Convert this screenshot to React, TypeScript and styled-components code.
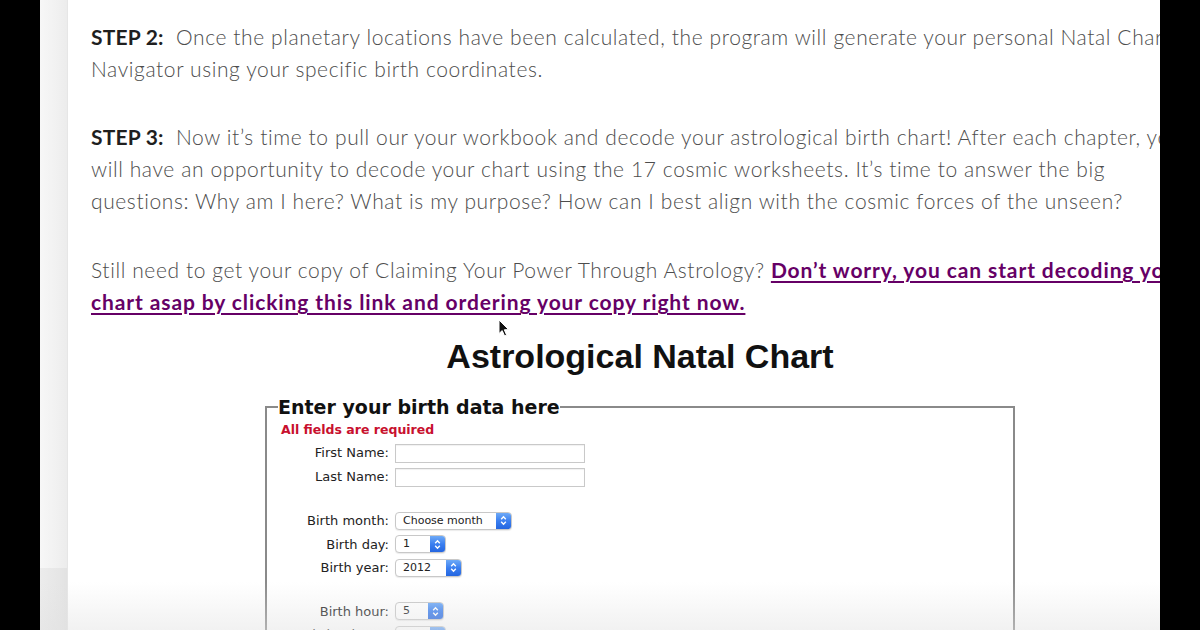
import React from "react";
import styled, { createGlobalStyle } from "styled-components";

const GlobalStyle = createGlobalStyle`
  html, body {
    margin: 0;
    padding: 0;
    background: #000000;
  }
`;

const Frame = styled.div`
  position: relative;
  display: flex;
  width: 1200px;
  height: 630px;
  overflow: hidden;
  background: #000000;
`;

const BlackBar = styled.div`
  flex: 0 0 40px;
  background: #000000;
  position: relative;
  z-index: 2;
`;

const SideStrip = styled.div`
  flex: 0 0 28px;
  display: flex;
  flex-direction: column;
  border-right: 1px solid #e6e6e6;
  box-sizing: border-box;
`;

const StripTop = styled.div`
  flex: 1;
  background: linear-gradient(to right, #f7f7f7, #f1f1f1 60%, #ececec);
`;

const StripBottom = styled.div`
  flex: 0 0 62px;
  background: linear-gradient(to right, #ececec, #e6e6e6 70%, #e2e2e2);
`;

const Viewport = styled.div`
  flex: 0 0 1092px;
  overflow: hidden;
  background: #ffffff;
`;

const Content = styled.div`
  width: 1144px;
  padding: 21px 0 0 23px;
  box-sizing: border-box;
`;

const Para = styled.p<{ $gap?: number }>`
  margin: 0 0 ${(p) => p.$gap ?? 36}px 0;
  font-family: Lato, "Open Sans", sans-serif;
  font-weight: 300;
  font-size: 21px;
  line-height: 32px;
  color: #4d4d4d;
  white-space: nowrap;
  letter-spacing: 0.6px;
`;

const Step = styled.strong`
  font-weight: 700;
  color: #1f1f1f;
  letter-spacing: 0.2px;
  margin-right: 6px;
`;

const BookLink = styled.a`
  color: #660066;
  font-weight: 700;
  letter-spacing: 0.9px;
  text-decoration: underline;
  text-underline-offset: 3px;
  text-decoration-thickness: 2px;
`;

const Title = styled.h1`
  margin: 0;
  font-family: "Liberation Sans", Arial, sans-serif;
  font-weight: 700;
  font-size: 34px;
  line-height: 40px;
  color: #111111;
  text-align: center;
  padding-right: 23px;
`;

const Fieldset = styled.fieldset`
  width: 750px;
  margin: 21px auto 0 174px;
  padding: 0 0 0 11px;
  box-sizing: border-box;
  border: 2px solid #8a8a8a;
  border-bottom: none;
  height: 260px;
`;

const Legend = styled.legend`
  padding: 0;
  font-family: "DejaVu Sans", Verdana, sans-serif;
  font-weight: 700;
  font-size: 19px;
  line-height: 20px;
  color: #111111;
`;

const Required = styled.div`
  margin: 5px 0 4px 3px;
  font-family: "DejaVu Sans", Verdana, sans-serif;
  font-weight: 700;
  font-size: 12.5px;
  color: #c8102e;
`;

const FormGrid = styled.div`
  display: grid;
  grid-template-columns: 111px auto;
  column-gap: 6px;
  align-items: center;
  justify-items: start;
`;

const Label = styled.label<{ $h?: number }>`
  justify-self: end;
  height: ${(p) => p.$h ?? 24}px;
  line-height: ${(p) => p.$h ?? 24}px;
  font-family: "DejaVu Sans", Verdana, sans-serif;
  font-size: 13px;
  color: #222222;
  white-space: nowrap;
`;

const Spacer = styled.div`
  grid-column: 1 / span 2;
  height: 20px;
`;

const TextInput = styled.div`
  width: 190px;
  height: 19px;
  box-sizing: border-box;
  border: 1px solid #c9c9c9;
  box-shadow: inset 0 1px 1px rgba(0, 0, 0, 0.06);
  background: #ffffff;
`;

const Select = styled.div<{ $w: number }>`
  display: flex;
  width: ${(p) => p.$w}px;
  height: 18px;
  box-sizing: border-box;
  border: 1px solid #c8c8c8;
  border-radius: 4px;
  overflow: hidden;
  background: #ffffff;
  box-shadow: 0 1px 1px rgba(0, 0, 0, 0.08);
`;

const SelectText = styled.span`
  flex: 1;
  padding-left: 7px;
  font-family: "DejaVu Sans", Verdana, sans-serif;
  font-size: 11px;
  line-height: 16px;
  color: #222222;
  white-space: nowrap;
  overflow: hidden;
`;

const Stepper = styled.span`
  flex: 0 0 15px;
  display: flex;
  align-items: center;
  justify-content: center;
  background: linear-gradient(to bottom, #6eaaf7, #3b7ff0 50%, #2466e0);
`;

const BottomShade = styled.div`
  position: absolute;
  left: 0;
  right: 0;
  bottom: 0;
  height: 48px;
  background: linear-gradient(to bottom, rgba(230, 230, 230, 0), rgba(225, 225, 225, 0.45));
  pointer-events: none;
  z-index: 1;
`;

const Cursor = styled.svg`
  position: absolute;
  left: 498px;
  top: 319px;
  z-index: 3;
`;

const Arrows = () => (
  <svg width="7" height="11" viewBox="0 0 7 11">
    <path d="M1.2 4.2 L3.5 1.8 L5.8 4.2 M1.2 6.8 L3.5 9.2 L5.8 6.8" fill="none" stroke="#ffffff" strokeWidth="1.4" />
  </svg>
);

const Dropdown = ({ w, value }: { w: number; value: string }) => (
  <Select $w={w}>
    <SelectText>{value}</SelectText>
    <Stepper>
      <Arrows />
    </Stepper>
  </Select>
);

export default function App() {
  return (
    <>
      <GlobalStyle />
      <Frame>
        <BlackBar />
        <SideStrip>
          <StripTop />
          <StripBottom />
        </SideStrip>
        <Viewport>
          <Content>
            <Para>
              <Step>STEP 2:</Step> Once the planetary locations have been calculated, the program will generate your personal Natal Chart
              <br />
              Navigator using your specific birth coordinates.
            </Para>
            <Para $gap={37}>
              <Step>STEP 3:</Step> Now it&rsquo;s time to pull our your workbook and decode your astrological birth chart! After each chapter, you
              <br />
              will have an opportunity to decode your chart using the 17 cosmic worksheets. It&rsquo;s time to answer the big
              <br />
              questions: Why am I here? What is my purpose? How can I best align with the cosmic forces of the unseen?
            </Para>
            <Para $gap={18}>
              Still need to get your copy of Claiming Your Power Through Astrology?{" "}
              <BookLink href="#">Don&rsquo;t worry, you can start decoding your</BookLink>
              <br />
              <BookLink href="#">chart asap by clicking this link and ordering your copy right now.</BookLink>
            </Para>
            <Title>Astrological Natal Chart</Title>
            <Fieldset>
              <Legend>Enter your birth data here</Legend>
              <Required>All fields are required</Required>
              <FormGrid>
                <Label>First Name:</Label>
                <TextInput />
                <Label>Last Name:</Label>
                <TextInput />
                <Spacer />
                <Label $h={23.5}>Birth month:</Label>
                <Dropdown w={117} value="Choose month" />
                <Label $h={23.5}>Birth day:</Label>
                <Dropdown w={51} value="1" />
                <Label $h={23.5}>Birth year:</Label>
                <Dropdown w={67} value="2012" />
                <Spacer />
                <Label $h={23.5}>Birth hour:</Label>
                <Dropdown w={49} value="5" />
                <Label $h={23.5}>Birth minute:</Label>
                <Dropdown w={51} value="0" />
              </FormGrid>
            </Fieldset>
          </Content>
        </Viewport>
        <BlackBar />
        <BottomShade />
        <Cursor width="12" height="18" viewBox="0 0 12 18">
          <path d="M1 1 L1 14.5 L4.2 11.6 L6.6 17 L8.6 16.1 L6.3 10.8 L10.6 10.6 Z" fill="#111111" stroke="#ffffff" strokeWidth="1" />
        </Cursor>
      </Frame>
    </>
  );
}
